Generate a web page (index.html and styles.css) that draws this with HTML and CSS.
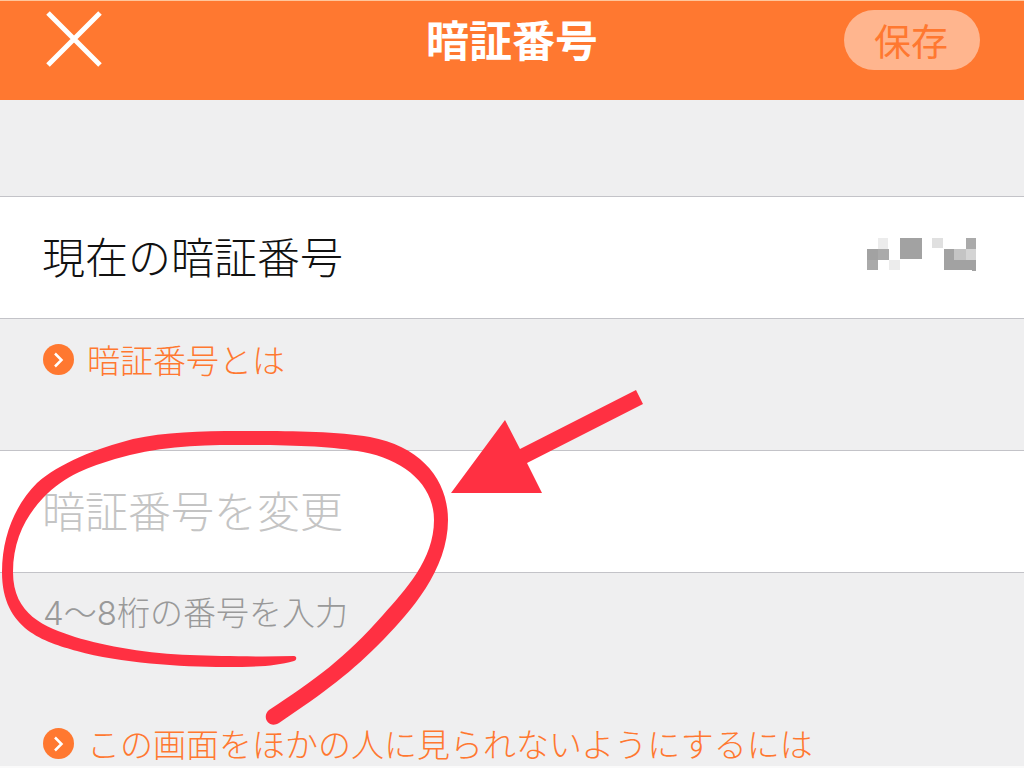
FILE: index.html
```html
<!DOCTYPE html>
<html lang="ja">

<head>
    <meta charset="UTF-8">
    <meta name="viewport" content="width=device-width, initial-scale=1.0">
    <title>暗証番号</title>
    <link rel="stylesheet" href="styles.css">
</head>

<body>
    <header class="header">
        <button class="close-button" type="button" aria-label="閉じる">
            <svg width="56" height="56" viewBox="0 0 56 56">
                <path d="M2 2L54 54M54 2L2 54" stroke="#fff" stroke-width="5" />
            </svg>
        </button>
        <h1 class="title">暗証番号</h1>
        <button class="save-button" type="submit" form="pin-form">保存</button>
    </header>

    <form id="pin-form" class="pin-form">
        <div class="row">
            <span class="label">現在の暗証番号</span>
            <!-- hidden number -->
            <svg class="mosaic" width="112" height="36" viewBox="0 0 112 36">
                <path fill="#ececec" d="M12 1h10v11H12zM23 23h11v10H23z" />
                <path fill="#e0e0e0" d="M66 1h11v10H66z" />
                <path fill="#a2a2a2" d="M1 12h11v11H1zM34 1h22v21H34zM78 12h10v11h22v10H78z" />
                <path fill="#aaaaaa" d="M12 12h11v11H12zM1 23h11v10H1zM100 1h10v11h-10z" />
                <path fill="#c4c4c4" d="M88 12h12v11H88z" />
                <path fill="#d4d4d4" d="M100 12h10v11h-10z" />
                <path fill="#a2a2a2" d="M106 33h4v1h-4z" />
            </svg>
        </div>

        <div class="note">
            <a class="help-link" href="#about">
                <svg width="31" height="31" viewBox="0 0 31 31">
                    <circle cx="15.5" cy="15.5" r="15.5" fill="#ff7830" />
                    <path d="M12 9.5L18.5 16L12 22.5" fill="none" stroke="#fff" stroke-width="2.5" />
                </svg>
                暗証番号とは
            </a>
        </div>

        <div class="row">
            <input class="pin-input" type="text" inputmode="numeric" maxlength="8" placeholder="暗証番号を変更"
                aria-label="暗証番号を変更" aria-describedby="pin-hint">
        </div>

        <div class="note note-last">
            <p id="pin-hint" class="hint">4〜8桁の番号を入力</p>
            <a class="help-link" href="#privacy">
                <svg width="31" height="31" viewBox="0 0 31 31">
                    <circle cx="15.5" cy="15.5" r="15.5" fill="#ff7830" />
                    <path d="M12 9.5L18.5 16L12 22.5" fill="none" stroke="#fff" stroke-width="2.5" />
                </svg>
                この画面をほかの人に見られないようにするには
            </a>
        </div>
    </form>

    <!-- red circle and arrow drawn over the form -->
    <svg class="marker" width="660" height="740" viewBox="0 0 660 740" aria-hidden="true">
        <path d="M294 656C260 657 220 656 190 655C150 654 105 646 75 637C45 627 13 615 13 572
            C13 540 26 516 43 498C66 474 90 467 115 459C155 447 195 445 235 445
            C290 445 330 446 363 452C405 460 434 485 434 520C434 560 405 590 383 615
            C345 658 315 680 269 710C261 717 269 729 279 723C325 692 352 672 384 639
            C410 612 448 570 448 520C448 480 422 447 370 437C335 431 285 431 240 431
            C200 431 165 432 133 439C95 449 60 463 37 483C16 504 2 535 2 572
            C2 630 45 642 77 651C120 663 180 667 225 667C260 667 275 666 294 661
            C297 660 297 656 294 656Z" />
        <path d="M636 390L643 404L527 463L542 493L451 493L505 420L520 449Z" />
    </svg>
</body>

</html>
```

FILE: styles.css
```css
* {
    box-sizing: border-box;
}

body {
    margin: 0;
    min-height: 100vh;
    background-color: #efeff0;
    font-family: 'Noto Sans CJK JP', sans-serif;
    font-weight: 300;
    color: #111;
}

button {
    border: none;
    padding: 0;
    font-family: inherit;
    cursor: pointer;
}

.header {
    display: grid;
    grid-template-columns: 1fr auto 1fr;
    align-items: start;
    height: 100px;
    padding: 9px 44px 0;
    border-top: 1px solid #ffc69c;
    background-color: #ff7830;
}

.close-button {
    justify-self: start;
    height: 56px;
    padding: 1px 0 0 2px;
    background: none;
}

.close-button svg {
    display: block;
}

.title {
    margin: 0;
    font-size: 43px;
    font-weight: 700;
    line-height: 56px;
    color: #fff;
}

.save-button {
    justify-self: end;
    width: 136px;
    height: 60px;
    padding-right: 2px;
    border-radius: 30px;
    background-color: #ffb58e;
    color: #ff7830;
    font-size: 37px;
    font-weight: 400;
    line-height: 60px;
}

.pin-form {
    padding-top: 96px;
}

.row {
    display: flex;
    align-items: center;
    justify-content: space-between;
    height: 123px;
    padding: 0 46px 6px 42px;
    border-top: 1px solid #c3c3c8;
    border-bottom: 1px solid #c3c3c8;
    background-color: #fff;
}

.label,
.pin-input {
    font-size: 43px;
    line-height: 64px;
}

.pin-input {
    width: 100%;
    padding: 0;
    border: none;
    outline: none;
    background: none;
    font-family: inherit;
    font-weight: inherit;
    color: #111;
}

.pin-input::placeholder {
    color: #c4c4c4;
    opacity: 1;
}

.note {
    height: 131px;
    padding: 16px 43px 0;
}

.note-last {
    height: auto;
    border-bottom: 2px solid #fafafa;
}

.help-link {
    display: flex;
    align-items: center;
    gap: 13px;
    font-size: 33px;
    line-height: 48px;
    color: #ff7830;
    text-decoration: none;
}

.hint {
    margin: 0 0 84px;
    font-family: Inter, 'Noto Sans CJK JP', sans-serif;
    font-size: 33px;
    line-height: 48px;
    color: #999;
}

.note-last .help-link {
    line-height: 45px;
}

.marker {
    position: absolute;
    top: 0;
    left: 0;
    fill: #ff3042;
    pointer-events: none;
}
```
